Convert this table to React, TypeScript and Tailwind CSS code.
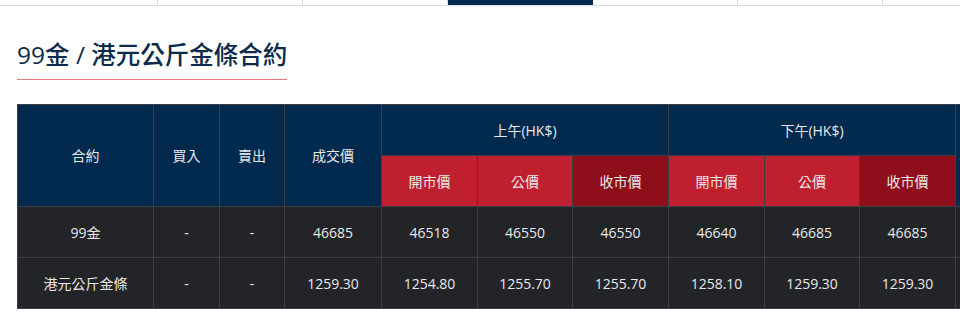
const tabs = [false, false, false, true, false, false, false];

const rows = [
  { name: "99金", bid: "-", ask: "-", last: "46685", am: ["46518", "46550", "46550"], pm: ["46640", "46685", "46685"] },
  { name: "港元公斤金條", bid: "-", ask: "-", last: "1259.30", am: ["1254.80", "1255.70", "1255.70"], pm: ["1258.10", "1259.30", "1259.30"] },
];

const cell = "border border-[#3b3e44] text-center align-middle";

export default function App() {
  return (
    <div className="w-[960px] h-[312px] overflow-hidden bg-white font-['Open_Sans','Noto_Sans_CJK_TC',sans-serif]">
      <div className="flex h-[6px] border-b border-[#dcdde6] pl-[13px]">
        {tabs.map((active, i) => (
          <div
            key={i}
            className={
              active
                ? "w-[145px] shrink-0 bg-[#012a4e]"
                : "w-[145px] shrink-0 border-r border-[#dcdde6]"
            }
          />
        ))}
      </div>

      <div className="pl-[17px] pt-[31px]">
        <div className="inline-flex flex-col">
          <h2 className="whitespace-nowrap pr-[4px] text-[24.5px] leading-[36px] font-medium text-[#0c2b4b]">
            99金 / 港元公斤金條合約
          </h2>
          <div className="mt-[6px] h-px w-[270px] bg-[#e8747c]" />
        </div>
      </div>

      <div className="pl-[17px] pt-[24px]">
        <table className="table-fixed border-collapse border border-[#555] text-[14px] text-[#e8e8e8] w-[1040px]">
          <colgroup>
            <col className="w-[136px]" />
            <col className="w-[66px]" />
            <col className="w-[65px]" />
            <col className="w-[97px]" />
            <col className="w-[96px]" />
            <col className="w-[95px]" />
            <col className="w-[96px]" />
            <col className="w-[96px]" />
            <col className="w-[95px]" />
            <col className="w-[96px]" />
            <col className="w-[102px]" />
          </colgroup>
          <thead>
            <tr className="h-[51px] bg-[#012a4e]">
              <th rowSpan={2} className={`${cell} font-normal`}>合約</th>
              <th rowSpan={2} className={`${cell} font-normal`}>買入</th>
              <th rowSpan={2} className={`${cell} font-normal`}>賣出</th>
              <th rowSpan={2} className={`${cell} font-normal`}>成交價</th>
              <th colSpan={3} className={`${cell} font-normal`}>上午(HK$)</th>
              <th colSpan={3} className={`${cell} font-normal`}>下午(HK$)</th>
              <th rowSpan={2} className={`${cell} font-normal`}></th>
            </tr>
            <tr className="h-[51px]">
              <th className={`${cell} font-normal bg-[#c01f2f]`}>開市價</th>
              <th className={`${cell} font-normal bg-[#c01f2f]`}>公價</th>
              <th className={`${cell} font-normal bg-[#8f0e1b]`}>收市價</th>
              <th className={`${cell} font-normal bg-[#c01f2f]`}>開市價</th>
              <th className={`${cell} font-normal bg-[#c01f2f]`}>公價</th>
              <th className={`${cell} font-normal bg-[#8f0e1b]`}>收市價</th>
            </tr>
          </thead>
          <tbody className="bg-[#222428]">
            {rows.map((r) => (
              <tr key={r.name} className="h-[51px]">
                <td className={cell}>{r.name}</td>
                <td className={cell}>{r.bid}</td>
                <td className={cell}>{r.ask}</td>
                <td className={cell}>{r.last}</td>
                {r.am.map((v, i) => (
                  <td key={"a" + i} className={cell}>{v}</td>
                ))}
                {r.pm.map((v, i) => (
                  <td key={"p" + i} className={cell}>{v}</td>
                ))}
                <td className={cell}></td>
              </tr>
            ))}
          </tbody>
        </table>
      </div>
    </div>
  );
}
